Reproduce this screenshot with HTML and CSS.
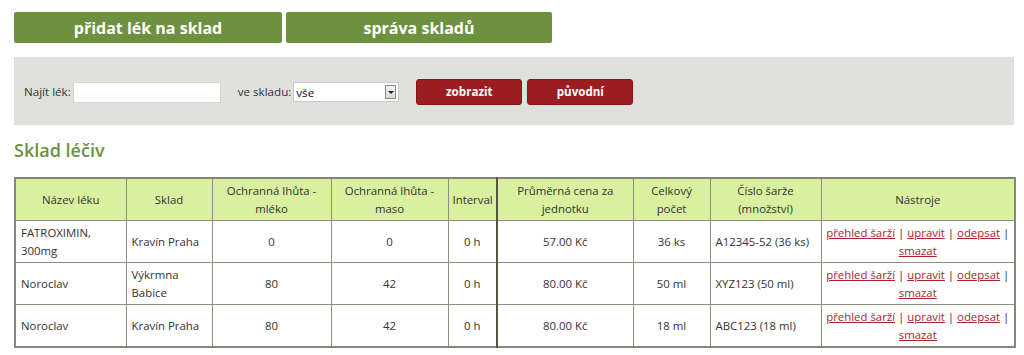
FILE: index.html
```html
<!DOCTYPE html>
<html lang="cs">
<head>
<meta charset="utf-8">
<title>Sklad léčiv</title>
<link rel="stylesheet" href="styles.css">
</head>
<body>
<div class="page">
  <div class="topnav">
    <a class="navbtn nav1" href="#">přidat lék na sklad</a>
    <a class="navbtn nav2" href="#">správa skladů</a>
  </div>
  <form class="filter">
    <label class="lbl">Najít lék:</label>
    <input class="search" type="text">
    <label class="lbl lbl2">ve skladu:</label>
    <div class="select"><span class="selval">vše</span><span class="selarrow"><span class="tri"></span></span></div>
    <button class="redbtn" type="button">zobrazit</button>
    <button class="redbtn" type="button">původní</button>
  </form>
  <h2 class="title">Sklad léčiv</h2>
  <table class="grid">
    <colgroup>
      <col style="width:111px"><col style="width:86px"><col style="width:119px"><col style="width:117px"><col style="width:49px"><col style="width:136px"><col style="width:77px"><col style="width:111px"><col style="width:194px">
    </colgroup>
    <thead>
      <tr>
        <th>Název léku</th><th>Sklad</th><th>Ochranná lhůta - mléko</th><th>Ochranná lhůta - maso</th><th class="sep">Interval</th><th>Průměrná cena za jednotku</th><th>Celkový počet</th><th>Číslo šarže (množství)</th><th>Nástroje</th>
      </tr>
    </thead>
    <tbody>
      <tr>
        <td class="l">FATROXIMIN, 300mg</td><td class="l">Kravín Praha</td><td>0</td><td>0</td><td class="sep">0 h</td><td>57.00 Kč</td><td>36 ks</td><td class="l">A12345-52 (36 ks)</td>
        <td class="tools"><a href="#">přehled šarží</a> | <a href="#">upravit</a> | <a href="#">odepsat</a> | <a href="#">smazat</a></td>
      </tr>
      <tr>
        <td class="l">Noroclav</td><td class="l">Výkrmna Babice</td><td>80</td><td>42</td><td class="sep">0 h</td><td>80.00 Kč</td><td>50 ml</td><td class="l">XYZ123 (50 ml)</td>
        <td class="tools"><a href="#">přehled šarží</a> | <a href="#">upravit</a> | <a href="#">odepsat</a> | <a href="#">smazat</a></td>
      </tr>
      <tr>
        <td class="l">Noroclav</td><td class="l">Kravín Praha</td><td>80</td><td>42</td><td class="sep">0 h</td><td>80.00 Kč</td><td>18 ml</td><td class="l">ABC123 (18 ml)</td>
        <td class="tools"><a href="#">přehled šarží</a> | <a href="#">upravit</a> | <a href="#">odepsat</a> | <a href="#">smazat</a></td>
      </tr>
    </tbody>
  </table>
</div>
</body>
</html>
```
FILE: styles.css
```css
html, body { margin: 0; padding: 0; background: #fff; }
body { font-family: "Open Sans", "DejaVu Sans", sans-serif; font-size: 12px; color: #333; }
.page { padding: 12px 10px 0 14px; }
.topnav { display: flex; gap: 4px; }
.navbtn {
  display: flex; align-items: center; justify-content: center;
  height: 31px; background: #6e9140; color: #fff; font-weight: bold; font-size: 16px;
  text-decoration: none; border-radius: 2px;
}
.nav1 { width: 268px; }
.nav2 { width: 266px; }
.filter {
  margin-top: 14px; height: 68px; width: 1000px; box-sizing: border-box;
  background: #e0e0dc; display: flex; align-items: center; padding: 0 0 0 10px;
}
.lbl { color: #333; font-size: 11.6px; }
.search {
  width: 148px; height: 21px; box-sizing: border-box; margin: 2px 0 0 2px;
  border: 1px solid #d5d5d0; background: #fff; padding: 0;
}
.lbl2 { margin-left: 17px; }
.select {
  width: 106px; height: 20px; box-sizing: border-box; margin: 2px 0 0 2px;
  background: #fff; border: 1px solid #c8c8c4; display: flex; align-items: center; justify-content: space-between;
}
.selval { padding-left: 2px; color: #111; font-size: 11.6px; }
.selarrow {
  width: 11px; height: 14px; margin-right: 2px; border: 1px solid #888; background: linear-gradient(#f4f4f4, #d8d8d8);
  display: flex; align-items: center; justify-content: center; box-sizing: border-box;
}
.tri { width: 0; height: 0; border-left: 3px solid transparent; border-right: 3px solid transparent; border-top: 3px solid #222; }
.redbtn {
  width: 106px; height: 26px; background: #9c1d20; color: #fff; border: 1px solid #8a1618; border-radius: 3px;
  font-family: "Open Sans", sans-serif; font-weight: bold; font-size: 11.6px; padding: 0; margin-top: 1px;
}
.select + .redbtn { margin-left: 17px; }
.redbtn + .redbtn { margin-left: 5px; }
.title { margin: 13px 0 0 0; font-size: 18px; font-weight: 600; color: #6e9140; line-height: 24px; }
.grid {
  margin-top: 15px; width: 1000px; border-collapse: collapse; table-layout: fixed;
  border: 2px solid #878778; font-size: 11.4px;
}
.grid th, .grid td { border: 1px solid #8e8e80; line-height: 18px; }
.grid th { background: #d8f0a0; font-weight: normal; height: 41px; padding: 0 4px; text-align: center; color: #333; }
.grid td { height: 41px; padding: 0 5px; text-align: center; color: #333; }
.grid td.l { text-align: left; }
.grid .sep { border-right: 2px solid #55553f; }
.tools a { color: #a8262a; text-decoration: underline; }
.grid td.tools { padding: 0 3px; }
```
